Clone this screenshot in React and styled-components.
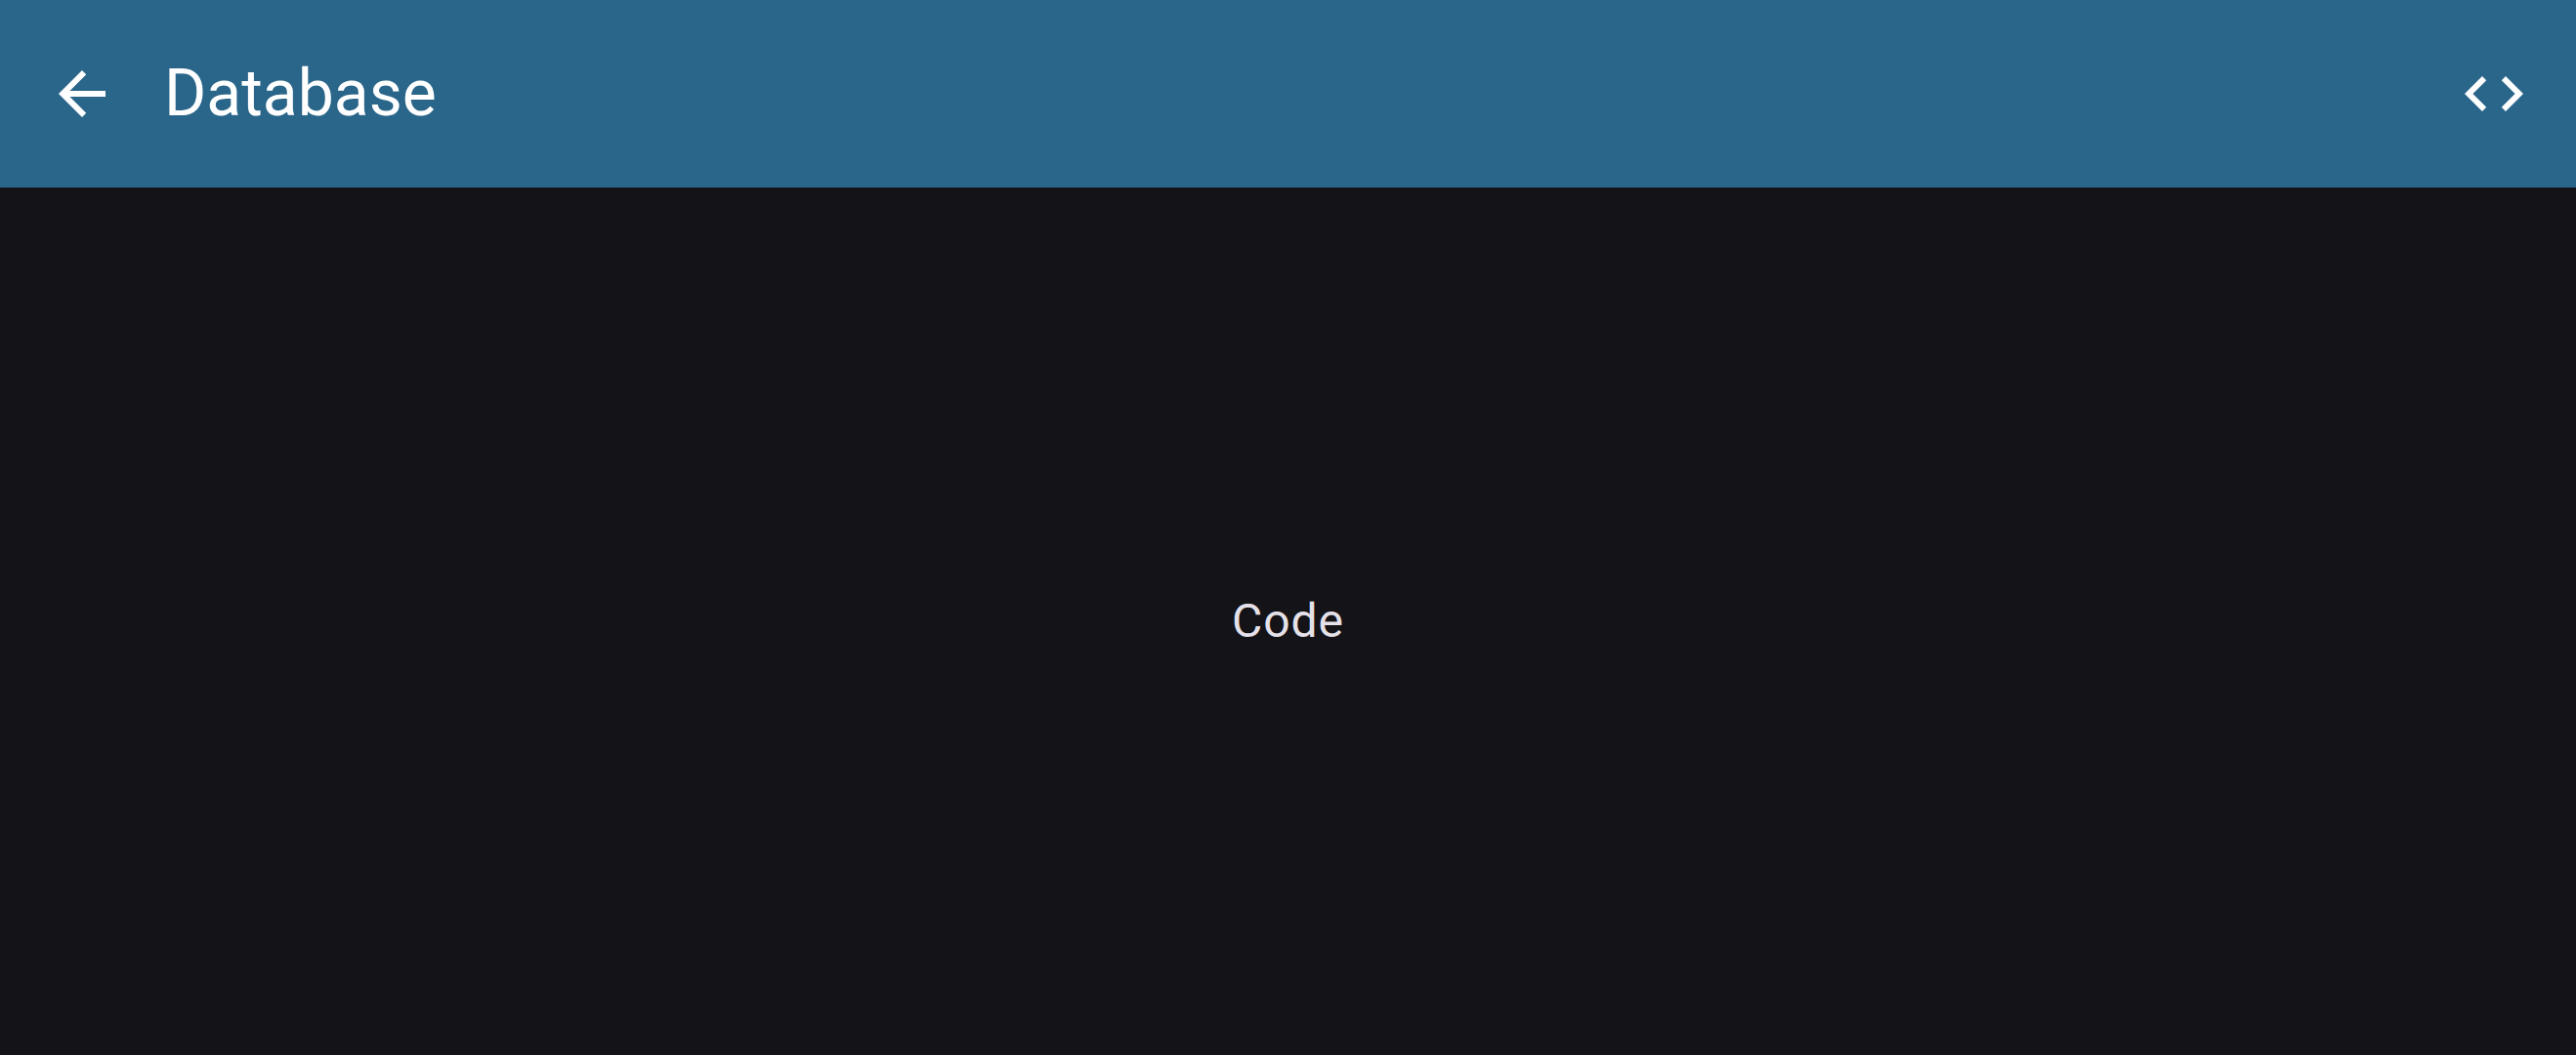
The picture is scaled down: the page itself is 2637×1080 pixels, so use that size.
import React from "react";
import styled, { createGlobalStyle } from "styled-components";

const GlobalStyle = createGlobalStyle`
  body {
    margin: 0;
    background: #141318;
    font-family: Roboto, sans-serif;
  }
`;

const Page = styled.div`
  display: flex;
  flex-direction: column;
  min-height: 100vh;
`;

const AppBar = styled.header`
  display: flex;
  align-items: center;
  box-sizing: border-box;
  height: 192px;
  padding: 0 12px;
  background: #2a668a;
  color: #ffffff;
`;

const IconButton = styled.button`
  display: flex;
  align-items: center;
  justify-content: center;
  width: 144px;
  height: 144px;
  padding: 0;
  border: 0;
  background: none;
  color: inherit;
  cursor: pointer;
`;

const Icon = styled.svg`
  width: 72px;
  height: 72px;
  fill: currentColor;
`;

const Title = styled.h1`
  flex: 1;
  margin: 0 0 0 12px;
  font-size: 66px;
  font-weight: 400;
  line-height: 84px;
`;

const Content = styled.main`
  display: flex;
  flex: 1;
  align-items: center;
  justify-content: center;
`;

const Message = styled.p`
  margin: 0;
  color: #e5e1e9;
  font-size: 48px;
  line-height: 72px;
  letter-spacing: 1px;
`;

export default function App() {
  return (
    <Page>
      <GlobalStyle />
      <AppBar>
        <IconButton type="button" aria-label="Back">
          <Icon viewBox="0 0 24 24" aria-hidden="true">
            <path d="M20 11H7.83l5.59-5.59L12 4l-8 8 8 8 1.41-1.41L7.83 13H20v-2z" />
          </Icon>
        </IconButton>
        <Title>Database</Title>
        <IconButton type="button" aria-label="View code">
          <Icon viewBox="0 0 24 24" aria-hidden="true">
            <path d="M9.4 16.6L4.8 12l4.6-4.6L8 6l-6 6 6 6 1.4-1.4zm5.2 0l4.6-4.6-4.6-4.6L16 6l6 6-6 6-1.4-1.4z" />
          </Icon>
        </IconButton>
      </AppBar>
      <Content>
        <Message>Code</Message>
      </Content>
    </Page>
  );
}
